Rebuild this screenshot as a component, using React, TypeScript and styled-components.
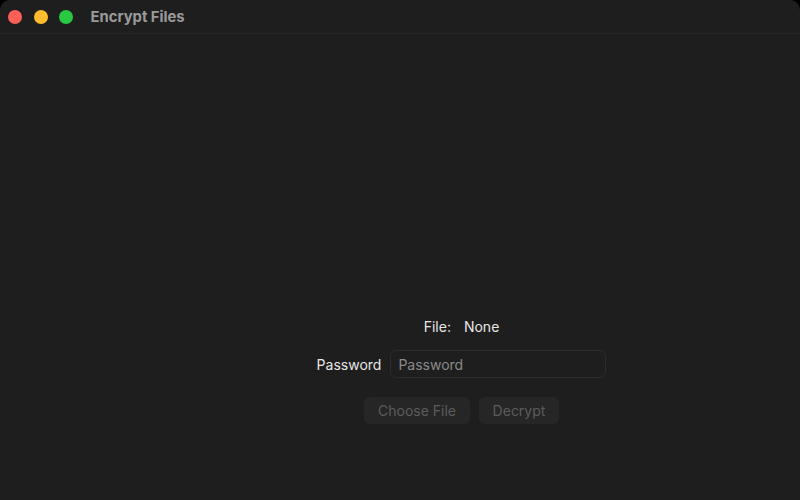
import React from "react";
import styled, { createGlobalStyle } from "styled-components";

const GlobalStyle = createGlobalStyle`
  html, body {
    margin: 0;
    padding: 0;
    background: #000;
  }
  #root {
    width: 800px;
    height: 500px;
  }
`;

const Window = styled.div`
  width: 800px;
  height: 500px;
  background: #1e1e1e;
  border-radius: 10px 10px 0 0;
  overflow: hidden;
  display: flex;
  flex-direction: column;
  font-family: Inter, "Liberation Sans", sans-serif;
`;

const TitleBar = styled.div`
  height: 34px;
  display: flex;
  align-items: center;
  padding-left: 8px;
  border-bottom: 1px solid #262626;
  box-sizing: border-box;
  flex-shrink: 0;
`;

const Light = styled.span<{ $color: string }>`
  width: 14px;
  height: 14px;
  border-radius: 50%;
  background: ${(p) => p.$color};
  margin-right: 11.5px;
`;

const Title = styled.div`
  margin-left: 6px;
  font-size: 14.8px;
  font-weight: 700;
  color: #9a9a9a;
`;

const Content = styled.div`
  flex: 1;
  display: flex;
  flex-direction: column;
  align-items: center;
  justify-content: flex-end;
  padding-left: 123px;
  padding-bottom: 76px;
`;

const Row = styled.div<{ $gap: number; $mb: number }>`
  display: flex;
  align-items: center;
  gap: ${(p) => p.$gap}px;
  margin-bottom: ${(p) => p.$mb}px;
`;

const Label = styled.span`
  font-size: 14px;
  color: #e6e6e6;
`;

const Input = styled.input`
  width: 216px;
  height: 28px;
  box-sizing: border-box;
  background: #1e1e1e;
  border: 1px solid #2c2c2c;
  border-radius: 6px;
  padding: 0 7px;
  font-family: Inter, "Liberation Sans", sans-serif;
  font-size: 14px;
  color: #e6e6e6;
  outline: none;
  &::placeholder {
    color: #8a8a8a;
  }
`;

const Button = styled.button<{ $w: number }>`
  width: ${(p) => p.$w}px;
  height: 27px;
  border: none;
  border-radius: 6px;
  background: #262626;
  color: #5c5c5c;
  font-family: Inter, "Liberation Sans", sans-serif;
  font-size: 14px;
  padding: 0;
`;

export default function App() {
  return (
    <>
      <GlobalStyle />
      <Window>
        <TitleBar>
          <Light $color="#fe5f57" />
          <Light $color="#febc2e" />
          <Light $color="#28c840" />
          <Title>Encrypt Files</Title>
        </TitleBar>
        <Content>
          <Row $gap={13} $mb={15}>
            <Label>File:</Label>
            <Label>None</Label>
          </Row>
          <Row $gap={9} $mb={19}>
            <Label>Password</Label>
            <Input placeholder="Password" />
          </Row>
          <Row $gap={9} $mb={0}>
            <Button $w={106} disabled>
              Choose File
            </Button>
            <Button $w={80} disabled>
              Decrypt
            </Button>
          </Row>
        </Content>
      </Window>
    </>
  );
}
